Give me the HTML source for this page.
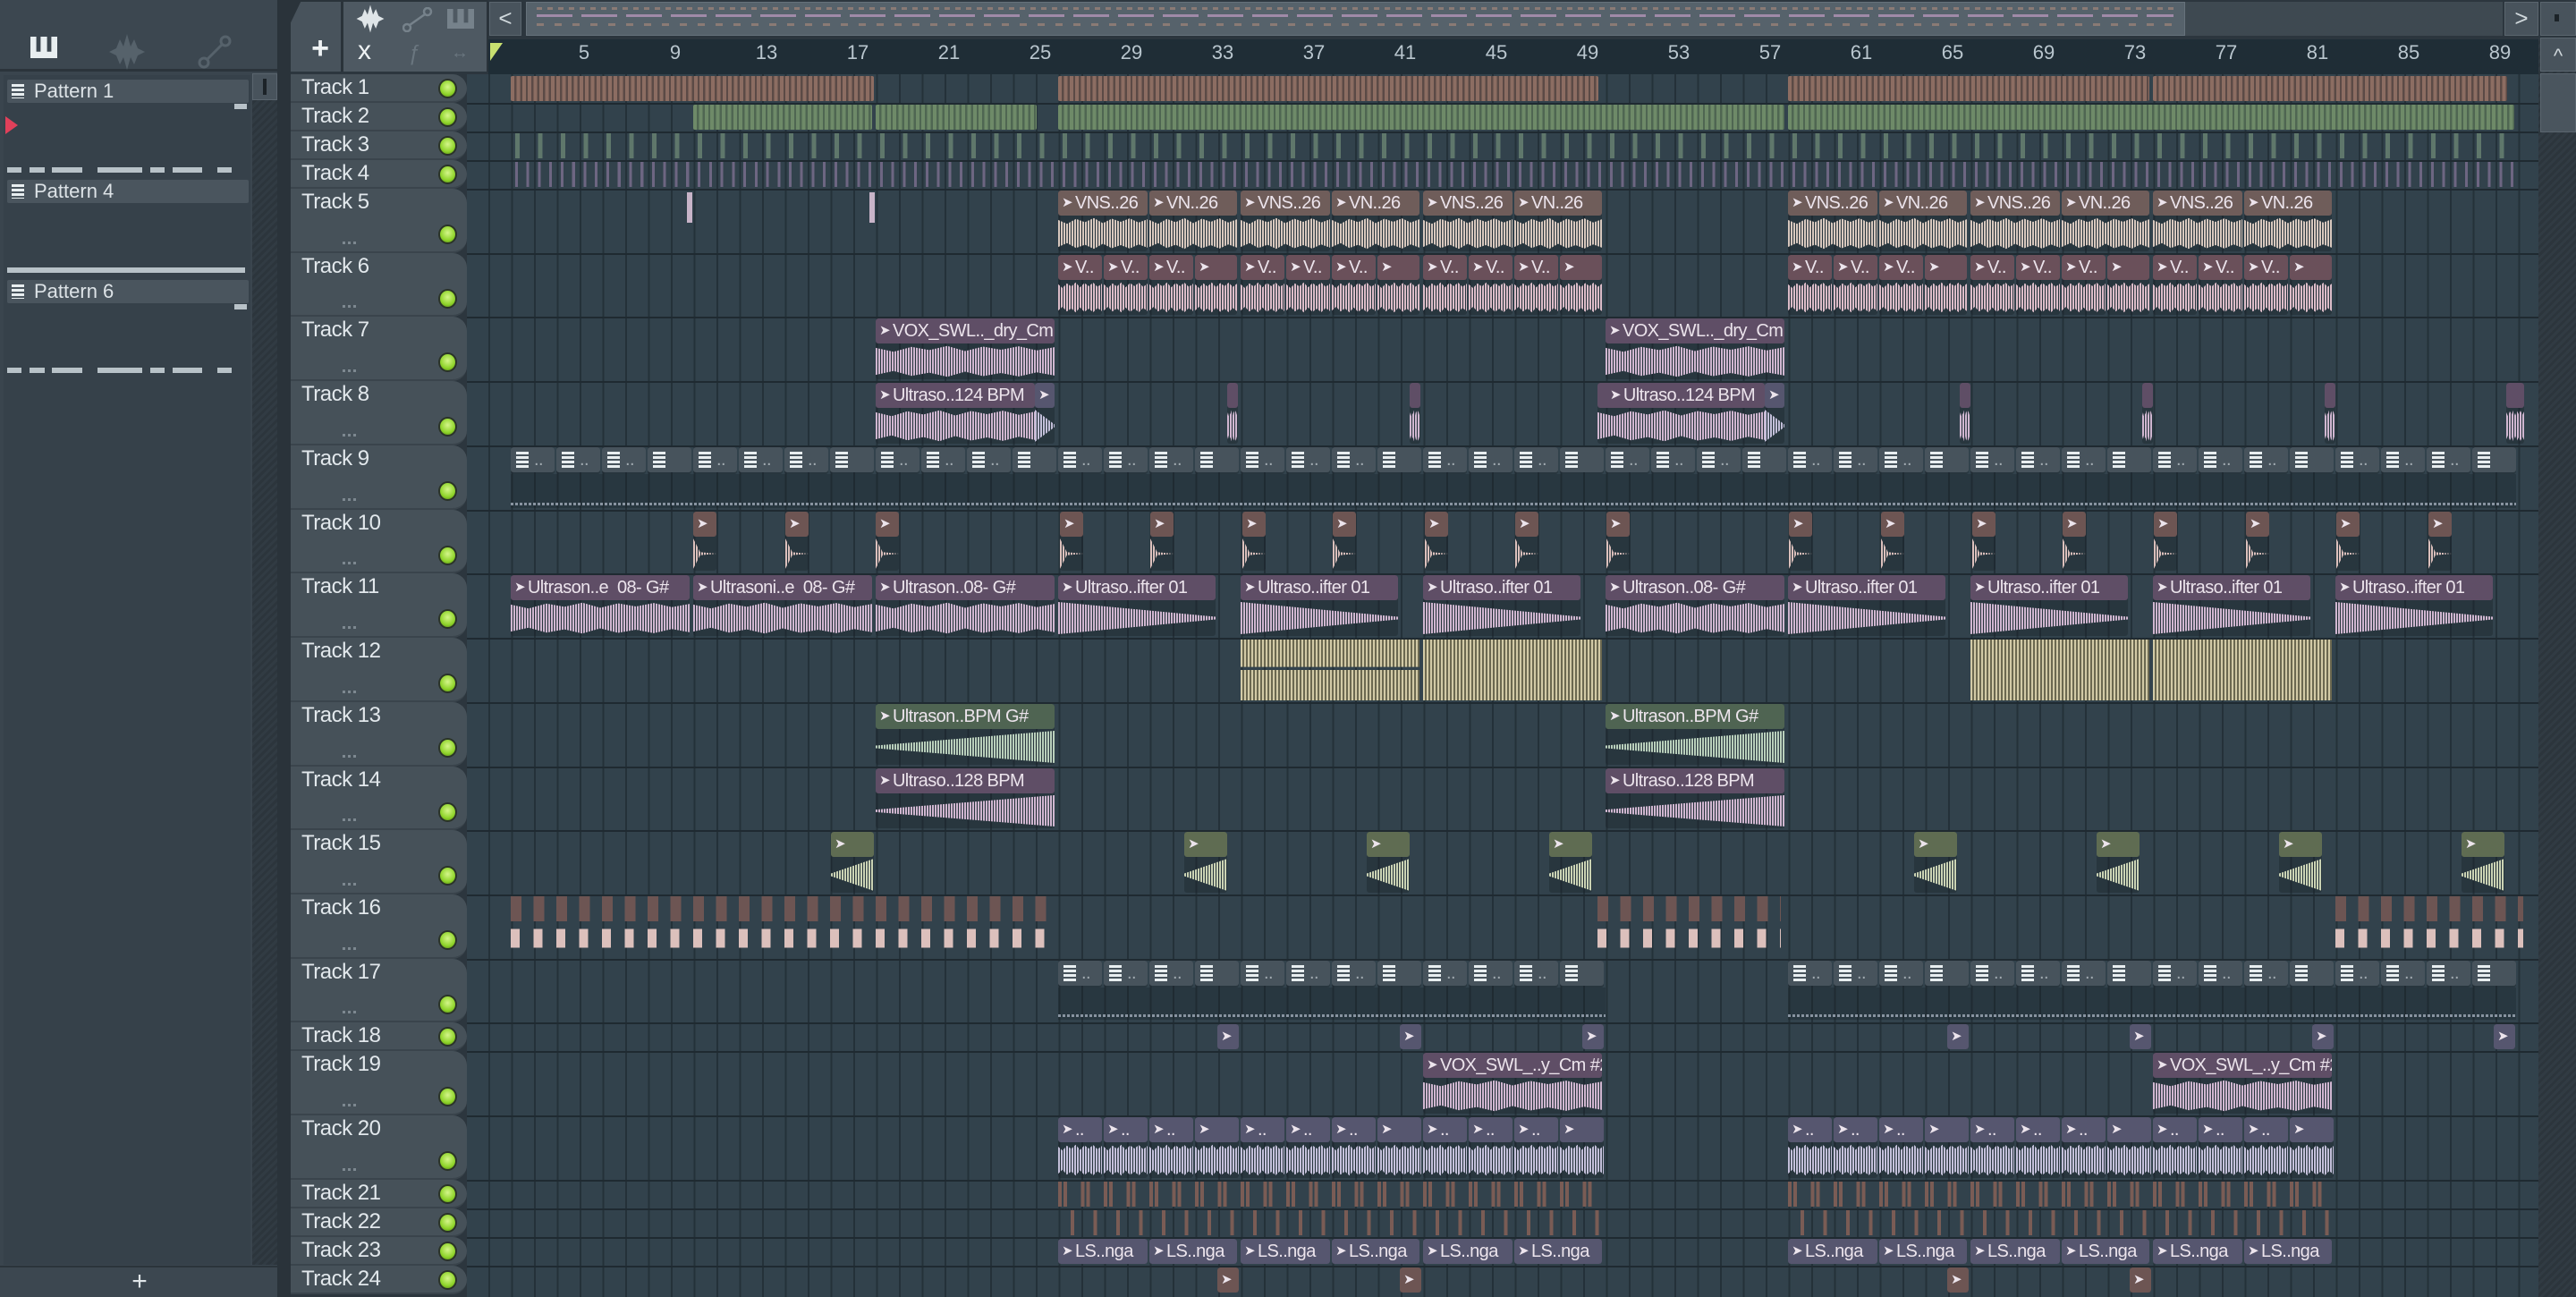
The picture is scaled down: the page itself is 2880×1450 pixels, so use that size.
<!DOCTYPE html>
<html><head><meta charset="utf-8">
<style>
*{box-sizing:border-box;margin:0;padding:0}
body{width:2880px;height:1450px;overflow:hidden;background:#2c363e;font-family:"Liberation Sans Narrow","Liberation Sans",sans-serif;position:relative}
.a{position:absolute}
#lp{left:0;top:0;width:312px;height:1450px;background:#3a454e}
.pat{position:absolute;left:8px;width:270px;height:26px;background:#4a555e;border-radius:2px;color:#dde3e7;font-size:22px;line-height:26px;padding-left:30px}
.pic{position:absolute;left:5px;top:5px;width:14px;height:16px;background:repeating-linear-gradient(180deg,#e8eef0 0 3px,#4a555e 3px 5px)}
.dash{position:absolute;left:8px;height:6px}
#hc .tr{position:absolute;left:325px;width:197px;background:#465159;border-radius:0 16px 16px 0;border-bottom:2px solid #3a444c}
.tr span{position:absolute;left:12px;top:1px;color:#e2e8ec;font-size:24px;letter-spacing:-0.5px}
.led{position:absolute;left:165px;width:21px;height:22px;border-radius:50%;background:radial-gradient(circle at 50% 40%,#d4f58a,#8fd42a 60%,#4e7d12);border:2px solid #2a3328}
.dots{position:absolute;left:58px;bottom:8px;width:16px;height:3px;background:repeating-linear-gradient(90deg,#7d8890 0 3px,transparent 3px 6px)}
#g{left:522px;top:83px;width:2316px;height:1367px;background:#32424c}
#gl{left:546px;top:83px;width:2292px;height:1367px;background:repeating-linear-gradient(90deg,#243139 0 2px,transparent 2px 25.5px)}
.rl{position:absolute;left:522px;width:2316px;height:2px;background:#1f2a31}
#cl{left:546px;top:83px;width:2292px;height:1367px}
.c{position:absolute;border-radius:3px;overflow:hidden;background:rgba(22,32,38,.35)}
.h{position:absolute;left:0;top:0;right:0;height:28px;background:var(--h);border-radius:3px;color:#ece4ec;font-size:20px;letter-spacing:-0.6px;line-height:28px;white-space:nowrap;overflow:hidden;padding-left:4px}
.h i{font-style:normal;font-size:15px;margin-right:3px;position:relative;top:-2px}
.w{position:absolute;left:0;right:0;top:30px;bottom:2px;background:repeating-linear-gradient(90deg,var(--w) 0 2px,rgba(0,0,0,0) 2px 3px);clip-path:polygon(0 8%,10% 20%,20% 5%,30% 15%,40% 2%,50% 18%,60% 4%,70% 14%,80% 3%,90% 16%,100% 6%,100% 94%,90% 84%,80% 97%,70% 86%,60% 96%,50% 82%,40% 98%,30% 85%,20% 95%,10% 80%,0 92%)}
.dec{clip-path:polygon(0 0,100% 46%,100% 54%,0 100%)}
.inc{clip-path:polygon(0 46%,100% 0,100% 100%,0 54%)}
.sp{clip-path:polygon(0 0,30% 45%,100% 50%,30% 55%,0 100%)}
.vn{--h:#6f5d5a;--w:#d8c8be}
.v6{--h:#6a505a;--w:#dcbcc8}
.px{--h:#5f4e66;--w:#d0b6d0}
.gr{--h:#4f6452;--w:#b9cfbb}
.gs{--h:#5f6c52;--w:#cbd3b4}
.br{--h:#6d5553;--w:#dcc0bc}
.bl{--h:#56566f;--w:#c4c0da}
.pt{--h:#47535c}
.pt .h{padding-left:6px;color:#a0aab0}
.pt .h b{display:inline-block;width:14px;height:18px;margin-right:6px;vertical-align:-3px;background:repeating-linear-gradient(180deg,#e8eef0 0 3px,#47535c 3px 5px)}
.s1{background:repeating-linear-gradient(90deg,#8c6d62 0 4px,#5b4a46 4px 6.4px);border-radius:2px}
.s2{background:repeating-linear-gradient(90deg,#6e8a68 0 4px,#4f6652 4px 6.4px);border-radius:2px}
.s3{background:repeating-linear-gradient(90deg,rgba(0,0,0,0) 0 5px,#5f776b 5px 10px,rgba(0,0,0,0) 10px 25.5px)}
.s4{background:repeating-linear-gradient(90deg,rgba(0,0,0,0) 0 5px,#6d6682 5px 8px,rgba(0,0,0,0) 8px 12.75px)}
.s21{background:repeating-linear-gradient(90deg,#7a5c55 0 4px,rgba(0,0,0,0) 4px 6px,#7a5c55 6px 10px,rgba(0,0,0,0) 10px 25.5px)}
.s22{background:repeating-linear-gradient(90deg,rgba(0,0,0,0) 0 14px,#7a5c55 14px 18px,rgba(0,0,0,0) 18px 25.5px)}
.pd{position:absolute;height:3px;background:repeating-linear-gradient(90deg,#8893a0 0 3px,rgba(0,0,0,0) 3px 5px)}
.rn{position:absolute;top:46px;width:50px;text-align:center;color:#b9c6ce;font-size:22px}
</style></head><body>

<div class="a" id="lp"></div>
<div class="a" style="left:0;top:0;width:312px;height:80px;background:#3c4750;border-bottom:3px solid #2b343b"></div>
<div class="a" style="left:34px;top:41px;width:30px;height:24px;background:#e8eef0;clip-path:polygon(0 0,22% 0,22% 70%,38% 70%,38% 0,62% 0,62% 70%,78% 70%,78% 0,100% 0,100% 100%,0 100%)"></div>
<svg class="a" style="left:120px;top:36px" width="44" height="44" viewBox="0 0 44 44"><path d="M2 22 L10 18 L14 8 L18 16 L22 2 L26 16 L30 8 L34 18 L42 22 L34 26 L30 36 L26 28 L22 42 L18 28 L14 36 L10 26Z" fill="#56626b"/></svg>
<svg class="a" style="left:220px;top:38px" width="40" height="40"><circle cx="8" cy="32" r="5" fill="none" stroke="#56626b" stroke-width="3"/><circle cx="32" cy="8" r="5" fill="none" stroke="#56626b" stroke-width="3"/><line x1="12" y1="28" x2="28" y2="12" stroke="#56626b" stroke-width="3"/></svg>
<div class="a" style="left:4px;top:84px;width:276px;height:1330px;background:#36414a"></div>
<div class="pat" style="top:89px"><div class="pic"></div>Pattern 1</div>
<div class="a" style="left:262px;top:116px;width:14px;height:6px;background:#b8c2c8"></div>
<div class="a" style="left:6px;top:130px;width:0;height:0;border-top:10px solid transparent;border-bottom:10px solid transparent;border-left:14px solid #e0405a"></div>
<div class="dash" style="top:187px;width:256px;background:linear-gradient(90deg,#b8c2c8 0 16px,transparent 16px 25px,#b8c2c8 25px 42px,transparent 42px 50px,#b8c2c8 50px 84px,transparent 84px 101px,#b8c2c8 101px 151px,transparent 151px 160px,#b8c2c8 160px 176px,transparent 176px 185px,#b8c2c8 185px 218px,transparent 218px 235px,#b8c2c8 235px 251px,transparent 251px)"></div>
<div class="pat" style="top:201px"><div class="pic"></div>Pattern 4</div>
<div class="a" style="left:8px;top:299px;width:266px;height:6px;background:#b8c2c8"></div>
<div class="pat" style="top:313px"><div class="pic"></div>Pattern 6</div>
<div class="a" style="left:262px;top:340px;width:14px;height:6px;background:#b8c2c8"></div>
<div class="dash" style="top:411px;width:256px;background:linear-gradient(90deg,#b8c2c8 0 16px,transparent 16px 25px,#b8c2c8 25px 42px,transparent 42px 50px,#b8c2c8 50px 84px,transparent 84px 101px,#b8c2c8 101px 151px,transparent 151px 160px,#b8c2c8 160px 176px,transparent 176px 185px,#b8c2c8 185px 218px,transparent 218px 235px,#b8c2c8 235px 251px,transparent 251px)"></div>
<div class="a" style="left:282px;top:84px;width:28px;height:1330px;background:repeating-linear-gradient(135deg,#313b43 0 3px,#2c353c 3px 6px)"></div>
<div class="a" style="left:282px;top:82px;width:28px;height:30px;background:#48535c;border:1px solid #5a656e"></div>
<div class="a" style="left:294px;top:88px;width:4px;height:18px;background:#1c2328"></div>
<div class="a" style="left:0;top:1415px;width:312px;height:35px;background:#3c4750;border-top:2px solid #2b343b;color:#dfe5e8;font-size:30px;text-align:center;line-height:32px">+</div>
<div class="a" style="left:310px;top:0;width:15px;height:1450px;background:#2a333a"></div>

<div class="a" style="left:325px;top:0;width:221px;height:80px;background:#2a333a"></div>
<div class="a" style="left:325px;top:2px;width:56px;height:78px;background:#48535c;clip-path:polygon(20% 0,100% 0,100% 100%,0 100%,0 30%)"></div>
<div class="a" style="left:338px;top:34px;width:40px;text-align:center;color:#eef2f4;font-size:34px;font-weight:bold;line-height:40px">+</div>
<div class="a" style="left:384px;top:2px;width:160px;height:78px;background:#4e5962"></div>
<svg class="a" style="left:392px;top:4px" width="44" height="34" viewBox="0 0 44 44"><path d="M2 22 L10 18 L14 8 L18 16 L22 2 L26 16 L30 8 L34 18 L42 22 L34 26 L30 36 L26 28 L22 42 L18 28 L14 36 L10 26Z" fill="#dfe5e8"/></svg>
<svg class="a" style="left:450px;top:8px" width="34" height="28"><circle cx="5" cy="23" r="4" fill="none" stroke="#76828b" stroke-width="2.5"/><circle cx="28" cy="5" r="4" fill="none" stroke="#76828b" stroke-width="2.5"/><line x1="8" y1="20" x2="25" y2="8" stroke="#76828b" stroke-width="2.5"/></svg>
<div class="a" style="left:500px;top:10px;width:30px;height:22px;background:#76828b;clip-path:polygon(0 0,22% 0,22% 70%,38% 70%,38% 0,62% 0,62% 70%,78% 70%,78% 0,100% 0,100% 100%,0 100%)"></div>
<div class="a" style="left:400px;top:40px;color:#eef2f4;font-size:30px">x</div>
<div class="a" style="left:456px;top:46px;color:#6a767f;font-size:24px;font-style:italic">ƒ</div>
<div class="a" style="left:504px;top:48px;color:#6a767f;font-size:20px">↔</div>

<div class="a" style="left:546px;top:0;width:2334px;height:44px;background:#2c363e"></div>
<div class="a" style="left:547px;top:2px;width:36px;height:38px;background:#48535c;border:1px solid #5a656e;color:#d0d8dc;font-size:26px;text-align:center;line-height:34px">&lt;</div>
<div class="a" style="left:588px;top:2px;width:1855px;height:38px;background:#56626b;border:1px solid #66727b"></div>
<div class="a" style="left:600px;top:8px;width:1830px;height:3px;background:repeating-linear-gradient(90deg,#8a7a75 0 6px,transparent 6px 12px)"></div>
<div class="a" style="left:600px;top:16px;width:1830px;height:3px;background:repeating-linear-gradient(90deg,#a08aa8 0 40px,transparent 40px 50px)"></div>
<div class="a" style="left:600px;top:26px;width:1830px;height:3px;background:repeating-linear-gradient(90deg,#8a7a75 0 8px,transparent 8px 20px)"></div>
<div class="a" style="left:2443px;top:2px;width:355px;height:38px;background:#3e4951"></div>
<div class="a" style="left:2800px;top:2px;width:38px;height:38px;background:#48535c;border:1px solid #5a656e;color:#d0d8dc;font-size:26px;text-align:center;line-height:34px">&gt;</div>
<div class="a" style="left:2840px;top:2px;width:40px;height:38px;background:#48535c;border:1px solid #5a656e"></div>
<div class="a" style="left:2856px;top:16px;width:5px;height:8px;background:#1c2328"></div>
<div class="a" style="left:546px;top:44px;width:2292px;height:39px;background:#1f2d36"></div>
<div class="a" style="left:548px;top:48px;width:0;height:0;border-left:14px solid #c8e070;border-bottom:20px solid transparent"></div>
<div class="rn" style="left:628px">5</div><div class="rn" style="left:730px">9</div><div class="rn" style="left:832px">13</div><div class="rn" style="left:934px">17</div><div class="rn" style="left:1036px">21</div><div class="rn" style="left:1138px">25</div><div class="rn" style="left:1240px">29</div><div class="rn" style="left:1342px">33</div><div class="rn" style="left:1444px">37</div><div class="rn" style="left:1546px">41</div><div class="rn" style="left:1648px">45</div><div class="rn" style="left:1750px">49</div><div class="rn" style="left:1852px">53</div><div class="rn" style="left:1954px">57</div><div class="rn" style="left:2056px">61</div><div class="rn" style="left:2158px">65</div><div class="rn" style="left:2260px">69</div><div class="rn" style="left:2362px">73</div><div class="rn" style="left:2464px">77</div><div class="rn" style="left:2566px">81</div><div class="rn" style="left:2668px">85</div><div class="rn" style="left:2770px">89</div>
<div class="a" style="left:2838px;top:42px;width:42px;height:1408px;background:repeating-linear-gradient(135deg,#313b43 0 3px,#2c353c 3px 6px)"></div>
<div class="a" style="left:2840px;top:42px;width:40px;height:38px;background:#48535c;border:1px solid #5a656e;color:#d0d8dc;font-size:22px;text-align:center;line-height:40px">^</div>
<div class="a" style="left:2840px;top:82px;width:40px;height:66px;background:#4a555e;border:1px solid #5a656e"></div>

<div class="a" id="g"></div>
<div class="a" id="gl"></div>
<div class="rl" style="top:115px"></div><div class="rl" style="top:147px"></div><div class="rl" style="top:179px"></div><div class="rl" style="top:211px"></div><div class="rl" style="top:283px"></div><div class="rl" style="top:354px"></div><div class="rl" style="top:426px"></div><div class="rl" style="top:498px"></div><div class="rl" style="top:570px"></div><div class="rl" style="top:641px"></div><div class="rl" style="top:713px"></div><div class="rl" style="top:785px"></div><div class="rl" style="top:857px"></div><div class="rl" style="top:928px"></div><div class="rl" style="top:1000px"></div><div class="rl" style="top:1072px"></div><div class="rl" style="top:1143px"></div><div class="rl" style="top:1175px"></div><div class="rl" style="top:1247px"></div><div class="rl" style="top:1319px"></div><div class="rl" style="top:1351px"></div><div class="rl" style="top:1383px"></div><div class="rl" style="top:1415px"></div>

<div id="hc">
<div class="tr" style="top:83px;height:32px"><span>Track 1</span><div class="led" style="top:5px"></div></div>
<div class="tr" style="top:115px;height:32px"><span>Track 2</span><div class="led" style="top:5px"></div></div>
<div class="tr" style="top:147px;height:32px"><span>Track 3</span><div class="led" style="top:5px"></div></div>
<div class="tr" style="top:179px;height:32px"><span>Track 4</span><div class="led" style="top:5px"></div></div>
<div class="tr" style="top:211px;height:72px"><span>Track 5</span><div class="led" style="top:40px"></div><div class="dots"></div></div>
<div class="tr" style="top:283px;height:71px"><span>Track 6</span><div class="led" style="top:40px"></div><div class="dots"></div></div>
<div class="tr" style="top:354px;height:72px"><span>Track 7</span><div class="led" style="top:40px"></div><div class="dots"></div></div>
<div class="tr" style="top:426px;height:72px"><span>Track 8</span><div class="led" style="top:40px"></div><div class="dots"></div></div>
<div class="tr" style="top:498px;height:72px"><span>Track 9</span><div class="led" style="top:40px"></div><div class="dots"></div></div>
<div class="tr" style="top:570px;height:71px"><span>Track 10</span><div class="led" style="top:40px"></div><div class="dots"></div></div>
<div class="tr" style="top:641px;height:72px"><span>Track 11</span><div class="led" style="top:40px"></div><div class="dots"></div></div>
<div class="tr" style="top:713px;height:72px"><span>Track 12</span><div class="led" style="top:40px"></div><div class="dots"></div></div>
<div class="tr" style="top:785px;height:72px"><span>Track 13</span><div class="led" style="top:40px"></div><div class="dots"></div></div>
<div class="tr" style="top:857px;height:71px"><span>Track 14</span><div class="led" style="top:40px"></div><div class="dots"></div></div>
<div class="tr" style="top:928px;height:72px"><span>Track 15</span><div class="led" style="top:40px"></div><div class="dots"></div></div>
<div class="tr" style="top:1000px;height:72px"><span>Track 16</span><div class="led" style="top:40px"></div><div class="dots"></div></div>
<div class="tr" style="top:1072px;height:71px"><span>Track 17</span><div class="led" style="top:40px"></div><div class="dots"></div></div>
<div class="tr" style="top:1143px;height:32px"><span>Track 18</span><div class="led" style="top:5px"></div></div>
<div class="tr" style="top:1175px;height:72px"><span>Track 19</span><div class="led" style="top:40px"></div><div class="dots"></div></div>
<div class="tr" style="top:1247px;height:72px"><span>Track 20</span><div class="led" style="top:40px"></div><div class="dots"></div></div>
<div class="tr" style="top:1319px;height:32px"><span>Track 21</span><div class="led" style="top:5px"></div></div>
<div class="tr" style="top:1351px;height:32px"><span>Track 22</span><div class="led" style="top:5px"></div></div>
<div class="tr" style="top:1383px;height:32px"><span>Track 23</span><div class="led" style="top:5px"></div></div>
<div class="tr" style="top:1415px;height:32px"><span>Track 24</span><div class="led" style="top:5px"></div></div>
</div>

<div class="a" id="cl">
<div class="a s1" style="left:25px;top:2px;width:406px;height:28px"></div>
<div class="a s1" style="left:637px;top:2px;width:604px;height:28px"></div>
<div class="a s1" style="left:1453px;top:2px;width:404px;height:28px"></div>
<div class="a s1" style="left:1861px;top:2px;width:396px;height:28px"></div>
<div class="a s2" style="left:229px;top:34px;width:200px;height:28px"></div>
<div class="a s2" style="left:433px;top:34px;width:180px;height:28px"></div>
<div class="a s2" style="left:637px;top:34px;width:812px;height:28px"></div>
<div class="a s2" style="left:1453px;top:34px;width:812px;height:28px"></div>
<div class="a s3" style="left:25px;top:66px;width:2240px;height:28px"></div>
<div class="a s4" style="left:25px;top:98px;width:2240px;height:28px"></div>
<div class="a" style="left:222px;top:132px;width:6px;height:34px;background:#c8b4c8"></div>
<div class="a" style="left:426px;top:132px;width:6px;height:34px;background:#c8b4c8"></div>
<div class="c vn" style="left:637px;top:130px;width:100px;height:68px"><div class="h"><i>➤</i>VNS..26</div><div class="w"></div></div>
<div class="c vn" style="left:739px;top:130px;width:98px;height:68px"><div class="h"><i>➤</i>VN..26</div><div class="w"></div></div>
<div class="c vn" style="left:841px;top:130px;width:100px;height:68px"><div class="h"><i>➤</i>VNS..26</div><div class="w"></div></div>
<div class="c vn" style="left:943px;top:130px;width:98px;height:68px"><div class="h"><i>➤</i>VN..26</div><div class="w"></div></div>
<div class="c vn" style="left:1045px;top:130px;width:100px;height:68px"><div class="h"><i>➤</i>VNS..26</div><div class="w"></div></div>
<div class="c vn" style="left:1147px;top:130px;width:98px;height:68px"><div class="h"><i>➤</i>VN..26</div><div class="w"></div></div>
<div class="c vn" style="left:1453px;top:130px;width:100px;height:68px"><div class="h"><i>➤</i>VNS..26</div><div class="w"></div></div>
<div class="c vn" style="left:1555px;top:130px;width:98px;height:68px"><div class="h"><i>➤</i>VN..26</div><div class="w"></div></div>
<div class="c vn" style="left:1657px;top:130px;width:100px;height:68px"><div class="h"><i>➤</i>VNS..26</div><div class="w"></div></div>
<div class="c vn" style="left:1759px;top:130px;width:98px;height:68px"><div class="h"><i>➤</i>VN..26</div><div class="w"></div></div>
<div class="c vn" style="left:1861px;top:130px;width:100px;height:68px"><div class="h"><i>➤</i>VNS..26</div><div class="w"></div></div>
<div class="c vn" style="left:1963px;top:130px;width:98px;height:68px"><div class="h"><i>➤</i>VN..26</div><div class="w"></div></div>
<div class="c v6" style="left:637px;top:202px;width:49px;height:67px"><div class="h"><i>➤</i>V..</div><div class="w"></div></div>
<div class="c v6" style="left:688px;top:202px;width:49px;height:67px"><div class="h"><i>➤</i>V..</div><div class="w"></div></div>
<div class="c v6" style="left:739px;top:202px;width:49px;height:67px"><div class="h"><i>➤</i>V..</div><div class="w"></div></div>
<div class="c v6" style="left:790px;top:202px;width:47px;height:67px"><div class="h"><i>➤</i></div><div class="w"></div></div>
<div class="c v6" style="left:841px;top:202px;width:49px;height:67px"><div class="h"><i>➤</i>V..</div><div class="w"></div></div>
<div class="c v6" style="left:892px;top:202px;width:49px;height:67px"><div class="h"><i>➤</i>V..</div><div class="w"></div></div>
<div class="c v6" style="left:943px;top:202px;width:49px;height:67px"><div class="h"><i>➤</i>V..</div><div class="w"></div></div>
<div class="c v6" style="left:994px;top:202px;width:47px;height:67px"><div class="h"><i>➤</i></div><div class="w"></div></div>
<div class="c v6" style="left:1045px;top:202px;width:49px;height:67px"><div class="h"><i>➤</i>V..</div><div class="w"></div></div>
<div class="c v6" style="left:1096px;top:202px;width:49px;height:67px"><div class="h"><i>➤</i>V..</div><div class="w"></div></div>
<div class="c v6" style="left:1147px;top:202px;width:49px;height:67px"><div class="h"><i>➤</i>V..</div><div class="w"></div></div>
<div class="c v6" style="left:1198px;top:202px;width:47px;height:67px"><div class="h"><i>➤</i></div><div class="w"></div></div>
<div class="c v6" style="left:1453px;top:202px;width:49px;height:67px"><div class="h"><i>➤</i>V..</div><div class="w"></div></div>
<div class="c v6" style="left:1504px;top:202px;width:49px;height:67px"><div class="h"><i>➤</i>V..</div><div class="w"></div></div>
<div class="c v6" style="left:1555px;top:202px;width:49px;height:67px"><div class="h"><i>➤</i>V..</div><div class="w"></div></div>
<div class="c v6" style="left:1606px;top:202px;width:47px;height:67px"><div class="h"><i>➤</i></div><div class="w"></div></div>
<div class="c v6" style="left:1657px;top:202px;width:49px;height:67px"><div class="h"><i>➤</i>V..</div><div class="w"></div></div>
<div class="c v6" style="left:1708px;top:202px;width:49px;height:67px"><div class="h"><i>➤</i>V..</div><div class="w"></div></div>
<div class="c v6" style="left:1759px;top:202px;width:49px;height:67px"><div class="h"><i>➤</i>V..</div><div class="w"></div></div>
<div class="c v6" style="left:1810px;top:202px;width:47px;height:67px"><div class="h"><i>➤</i></div><div class="w"></div></div>
<div class="c v6" style="left:1861px;top:202px;width:49px;height:67px"><div class="h"><i>➤</i>V..</div><div class="w"></div></div>
<div class="c v6" style="left:1912px;top:202px;width:49px;height:67px"><div class="h"><i>➤</i>V..</div><div class="w"></div></div>
<div class="c v6" style="left:1963px;top:202px;width:49px;height:67px"><div class="h"><i>➤</i>V..</div><div class="w"></div></div>
<div class="c v6" style="left:2014px;top:202px;width:47px;height:67px"><div class="h"><i>➤</i></div><div class="w"></div></div>
<div class="c px" style="left:433px;top:273px;width:200px;height:68px"><div class="h"><i>➤</i>VOX_SWL.._dry_Cm</div><div class="w"></div></div>
<div class="c px" style="left:1249px;top:273px;width:200px;height:68px"><div class="h"><i>➤</i>VOX_SWL.._dry_Cm</div><div class="w"></div></div>
<div class="c px" style="left:433px;top:345px;width:178px;height:68px"><div class="h"><i>➤</i>Ultraso..124 BPM</div><div class="w"></div></div>
<div class="c bl" style="left:611px;top:345px;width:22px;height:68px"><div class="h"><i>➤</i></div><div class="w dec"></div></div>
<div class="c px" style="left:1240px;top:345px;width:187px;height:68px"><div class="h">&nbsp;&nbsp;<i>➤</i>Ultraso..124 BPM</div><div class="w"></div></div>
<div class="c bl" style="left:1427px;top:345px;width:22px;height:68px"><div class="h"><i>➤</i></div><div class="w dec"></div></div>
<div class="c px" style="left:826px;top:345px;width:12px;height:68px"><div class="h"></div><div class="w"></div></div>
<div class="c px" style="left:1030px;top:345px;width:12px;height:68px"><div class="h"></div><div class="w"></div></div>
<div class="c px" style="left:1645px;top:345px;width:12px;height:68px"><div class="h"></div><div class="w"></div></div>
<div class="c px" style="left:1849px;top:345px;width:12px;height:68px"><div class="h"></div><div class="w"></div></div>
<div class="c px" style="left:2053px;top:345px;width:12px;height:68px"><div class="h"></div><div class="w"></div></div>
<div class="c px" style="left:2256px;top:345px;width:20px;height:68px"><div class="h"></div><div class="w"></div></div>
<div class="c pt" style="left:25px;top:417px;width:49px;height:30px"><div class="h"><b></b>..</div></div><div class="c pt" style="left:76px;top:417px;width:49px;height:30px"><div class="h"><b></b>..</div></div><div class="c pt" style="left:127px;top:417px;width:49px;height:30px"><div class="h"><b></b>..</div></div><div class="c pt" style="left:178px;top:417px;width:49px;height:30px"><div class="h"><b></b></div></div>
<div class="c pt" style="left:229px;top:417px;width:49px;height:30px"><div class="h"><b></b>..</div></div><div class="c pt" style="left:280px;top:417px;width:49px;height:30px"><div class="h"><b></b>..</div></div><div class="c pt" style="left:331px;top:417px;width:49px;height:30px"><div class="h"><b></b>..</div></div><div class="c pt" style="left:382px;top:417px;width:49px;height:30px"><div class="h"><b></b></div></div>
<div class="c pt" style="left:433px;top:417px;width:49px;height:30px"><div class="h"><b></b>..</div></div><div class="c pt" style="left:484px;top:417px;width:49px;height:30px"><div class="h"><b></b>..</div></div><div class="c pt" style="left:535px;top:417px;width:49px;height:30px"><div class="h"><b></b>..</div></div><div class="c pt" style="left:586px;top:417px;width:49px;height:30px"><div class="h"><b></b></div></div>
<div class="c pt" style="left:637px;top:417px;width:49px;height:30px"><div class="h"><b></b>..</div></div><div class="c pt" style="left:688px;top:417px;width:49px;height:30px"><div class="h"><b></b>..</div></div><div class="c pt" style="left:739px;top:417px;width:49px;height:30px"><div class="h"><b></b>..</div></div><div class="c pt" style="left:790px;top:417px;width:49px;height:30px"><div class="h"><b></b></div></div>
<div class="c pt" style="left:841px;top:417px;width:49px;height:30px"><div class="h"><b></b>..</div></div><div class="c pt" style="left:892px;top:417px;width:49px;height:30px"><div class="h"><b></b>..</div></div><div class="c pt" style="left:943px;top:417px;width:49px;height:30px"><div class="h"><b></b>..</div></div><div class="c pt" style="left:994px;top:417px;width:49px;height:30px"><div class="h"><b></b></div></div>
<div class="c pt" style="left:1045px;top:417px;width:49px;height:30px"><div class="h"><b></b>..</div></div><div class="c pt" style="left:1096px;top:417px;width:49px;height:30px"><div class="h"><b></b>..</div></div><div class="c pt" style="left:1147px;top:417px;width:49px;height:30px"><div class="h"><b></b>..</div></div><div class="c pt" style="left:1198px;top:417px;width:49px;height:30px"><div class="h"><b></b></div></div>
<div class="c pt" style="left:1249px;top:417px;width:49px;height:30px"><div class="h"><b></b>..</div></div><div class="c pt" style="left:1300px;top:417px;width:49px;height:30px"><div class="h"><b></b>..</div></div><div class="c pt" style="left:1351px;top:417px;width:49px;height:30px"><div class="h"><b></b>..</div></div><div class="c pt" style="left:1402px;top:417px;width:49px;height:30px"><div class="h"><b></b></div></div>
<div class="c pt" style="left:1453px;top:417px;width:49px;height:30px"><div class="h"><b></b>..</div></div><div class="c pt" style="left:1504px;top:417px;width:49px;height:30px"><div class="h"><b></b>..</div></div><div class="c pt" style="left:1555px;top:417px;width:49px;height:30px"><div class="h"><b></b>..</div></div><div class="c pt" style="left:1606px;top:417px;width:49px;height:30px"><div class="h"><b></b></div></div>
<div class="c pt" style="left:1657px;top:417px;width:49px;height:30px"><div class="h"><b></b>..</div></div><div class="c pt" style="left:1708px;top:417px;width:49px;height:30px"><div class="h"><b></b>..</div></div><div class="c pt" style="left:1759px;top:417px;width:49px;height:30px"><div class="h"><b></b>..</div></div><div class="c pt" style="left:1810px;top:417px;width:49px;height:30px"><div class="h"><b></b></div></div>
<div class="c pt" style="left:1861px;top:417px;width:49px;height:30px"><div class="h"><b></b>..</div></div><div class="c pt" style="left:1912px;top:417px;width:49px;height:30px"><div class="h"><b></b>..</div></div><div class="c pt" style="left:1963px;top:417px;width:49px;height:30px"><div class="h"><b></b>..</div></div><div class="c pt" style="left:2014px;top:417px;width:49px;height:30px"><div class="h"><b></b></div></div>
<div class="c pt" style="left:2065px;top:417px;width:49px;height:30px"><div class="h"><b></b>..</div></div><div class="c pt" style="left:2116px;top:417px;width:49px;height:30px"><div class="h"><b></b>..</div></div><div class="c pt" style="left:2167px;top:417px;width:49px;height:30px"><div class="h"><b></b>..</div></div><div class="c pt" style="left:2218px;top:417px;width:49px;height:30px"><div class="h"><b></b></div></div>
<div class="a" style="left:25px;top:447px;width:2242px;height:38px;background:rgba(20,30,36,.3)"></div>
<div class="pd" style="left:25px;top:479px;width:2242px"></div>
<div class="c br" style="left:229px;top:489px;width:26px;height:66px"><div class="h"><i>➤</i></div><div class="w sp"></div></div>
<div class="c br" style="left:332px;top:489px;width:26px;height:66px"><div class="h"><i>➤</i></div><div class="w sp"></div></div>
<div class="c br" style="left:433px;top:489px;width:26px;height:66px"><div class="h"><i>➤</i></div><div class="w sp"></div></div>
<div class="c br" style="left:639px;top:489px;width:26px;height:66px"><div class="h"><i>➤</i></div><div class="w sp"></div></div>
<div class="c br" style="left:740px;top:489px;width:26px;height:66px"><div class="h"><i>➤</i></div><div class="w sp"></div></div>
<div class="c br" style="left:843px;top:489px;width:26px;height:66px"><div class="h"><i>➤</i></div><div class="w sp"></div></div>
<div class="c br" style="left:944px;top:489px;width:26px;height:66px"><div class="h"><i>➤</i></div><div class="w sp"></div></div>
<div class="c br" style="left:1047px;top:489px;width:26px;height:66px"><div class="h"><i>➤</i></div><div class="w sp"></div></div>
<div class="c br" style="left:1148px;top:489px;width:26px;height:66px"><div class="h"><i>➤</i></div><div class="w sp"></div></div>
<div class="c br" style="left:1250px;top:489px;width:26px;height:66px"><div class="h"><i>➤</i></div><div class="w sp"></div></div>
<div class="c br" style="left:1454px;top:489px;width:26px;height:66px"><div class="h"><i>➤</i></div><div class="w sp"></div></div>
<div class="c br" style="left:1557px;top:489px;width:26px;height:66px"><div class="h"><i>➤</i></div><div class="w sp"></div></div>
<div class="c br" style="left:1659px;top:489px;width:26px;height:66px"><div class="h"><i>➤</i></div><div class="w sp"></div></div>
<div class="c br" style="left:1760px;top:489px;width:26px;height:66px"><div class="h"><i>➤</i></div><div class="w sp"></div></div>
<div class="c br" style="left:1862px;top:489px;width:26px;height:66px"><div class="h"><i>➤</i></div><div class="w sp"></div></div>
<div class="c br" style="left:1965px;top:489px;width:26px;height:66px"><div class="h"><i>➤</i></div><div class="w sp"></div></div>
<div class="c br" style="left:2066px;top:489px;width:26px;height:66px"><div class="h"><i>➤</i></div><div class="w sp"></div></div>
<div class="c br" style="left:2169px;top:489px;width:26px;height:66px"><div class="h"><i>➤</i></div><div class="w sp"></div></div>
<div class="c px" style="left:25px;top:560px;width:200px;height:68px"><div class="h"><i>➤</i>Ultrason..e&nbsp; 08- G#</div><div class="w"></div></div>
<div class="c px" style="left:229px;top:560px;width:200px;height:68px"><div class="h"><i>➤</i>Ultrasoni..e&nbsp; 08- G#</div><div class="w"></div></div>
<div class="c px" style="left:433px;top:560px;width:200px;height:68px"><div class="h"><i>➤</i>Ultrason..08- G#</div><div class="w"></div></div>
<div class="c px" style="left:637px;top:560px;width:176px;height:68px"><div class="h"><i>➤</i>Ultraso..ifter 01</div><div class="w dec"></div></div>
<div class="c px" style="left:841px;top:560px;width:176px;height:68px"><div class="h"><i>➤</i>Ultraso..ifter 01</div><div class="w dec"></div></div>
<div class="c px" style="left:1045px;top:560px;width:176px;height:68px"><div class="h"><i>➤</i>Ultraso..ifter 01</div><div class="w dec"></div></div>
<div class="c px" style="left:1249px;top:560px;width:200px;height:68px"><div class="h"><i>➤</i>Ultrason..08- G#</div><div class="w"></div></div>
<div class="c px" style="left:1453px;top:560px;width:176px;height:68px"><div class="h"><i>➤</i>Ultraso..ifter 01</div><div class="w dec"></div></div>
<div class="c px" style="left:1657px;top:560px;width:176px;height:68px"><div class="h"><i>➤</i>Ultraso..ifter 01</div><div class="w dec"></div></div>
<div class="c px" style="left:1861px;top:560px;width:176px;height:68px"><div class="h"><i>➤</i>Ultraso..ifter 01</div><div class="w dec"></div></div>
<div class="c px" style="left:2065px;top:560px;width:176px;height:68px"><div class="h"><i>➤</i>Ultraso..ifter 01</div><div class="w dec"></div></div>
<div class="a" style="left:841px;top:632px;width:200px;height:68px;background:repeating-linear-gradient(90deg,#d2caa6 0 2px,#6b6850 2px 4px);clip-path:polygon(0 0,100% 0,100% 45%,0 45%,0 50%,100% 50%,100% 100%,0 100%)"></div>
<div class="a" style="left:1045px;top:632px;width:200px;height:68px;background:repeating-linear-gradient(90deg,#d2caa6 0 2px,#6b6850 2px 4px)"></div>
<div class="a" style="left:1657px;top:632px;width:200px;height:68px;background:repeating-linear-gradient(90deg,#d2caa6 0 2px,#6b6850 2px 4px)"></div>
<div class="a" style="left:1861px;top:632px;width:200px;height:68px;background:repeating-linear-gradient(90deg,#d2caa6 0 2px,#6b6850 2px 4px)"></div>
<div class="c gr" style="left:433px;top:704px;width:200px;height:68px"><div class="h"><i>➤</i>Ultrason..BPM G#</div><div class="w inc"></div></div>
<div class="c gr" style="left:1249px;top:704px;width:200px;height:68px"><div class="h"><i>➤</i>Ultrason..BPM G#</div><div class="w inc"></div></div>
<div class="c px" style="left:433px;top:776px;width:200px;height:67px"><div class="h"><i>➤</i>Ultraso..128 BPM</div><div class="w inc"></div></div>
<div class="c px" style="left:1249px;top:776px;width:200px;height:67px"><div class="h"><i>➤</i>Ultraso..128 BPM</div><div class="w inc"></div></div>
<div class="c gs" style="left:383px;top:847px;width:48px;height:68px"><div class="h"><i>➤</i></div><div class="w inc"></div></div>
<div class="c gs" style="left:778px;top:847px;width:48px;height:68px"><div class="h"><i>➤</i></div><div class="w inc"></div></div>
<div class="c gs" style="left:982px;top:847px;width:48px;height:68px"><div class="h"><i>➤</i></div><div class="w inc"></div></div>
<div class="c gs" style="left:1186px;top:847px;width:48px;height:68px"><div class="h"><i>➤</i></div><div class="w inc"></div></div>
<div class="c gs" style="left:1594px;top:847px;width:48px;height:68px"><div class="h"><i>➤</i></div><div class="w inc"></div></div>
<div class="c gs" style="left:1798px;top:847px;width:48px;height:68px"><div class="h"><i>➤</i></div><div class="w inc"></div></div>
<div class="c gs" style="left:2002px;top:847px;width:48px;height:68px"><div class="h"><i>➤</i></div><div class="w inc"></div></div>
<div class="c gs" style="left:2206px;top:847px;width:48px;height:68px"><div class="h"><i>➤</i></div><div class="w inc"></div></div>
<div class="a" style="left:25px;top:919px;width:610px;height:28px;background:repeating-linear-gradient(90deg,#6d5553 0 12px,rgba(0,0,0,0) 12px 25.5px)"></div>
<div class="a" style="left:25px;top:951px;width:610px;height:30px;background:repeating-linear-gradient(90deg,#dcc0bc 0 10px,rgba(0,0,0,0) 10px 25.5px);clip-path:polygon(0 15%,100% 15%,100% 85%,0 85%)"></div>
<div class="a" style="left:1240px;top:919px;width:205px;height:28px;background:repeating-linear-gradient(90deg,#6d5553 0 12px,rgba(0,0,0,0) 12px 25.5px)"></div>
<div class="a" style="left:1240px;top:951px;width:205px;height:30px;background:repeating-linear-gradient(90deg,#dcc0bc 0 10px,rgba(0,0,0,0) 10px 25.5px);clip-path:polygon(0 15%,100% 15%,100% 85%,0 85%)"></div>
<div class="a" style="left:2065px;top:919px;width:210px;height:28px;background:repeating-linear-gradient(90deg,#6d5553 0 12px,rgba(0,0,0,0) 12px 25.5px)"></div>
<div class="a" style="left:2065px;top:951px;width:210px;height:30px;background:repeating-linear-gradient(90deg,#dcc0bc 0 10px,rgba(0,0,0,0) 10px 25.5px);clip-path:polygon(0 15%,100% 15%,100% 85%,0 85%)"></div>
<div class="c pt" style="left:637px;top:991px;width:49px;height:30px"><div class="h"><b></b>..</div></div><div class="c pt" style="left:688px;top:991px;width:49px;height:30px"><div class="h"><b></b>..</div></div><div class="c pt" style="left:739px;top:991px;width:49px;height:30px"><div class="h"><b></b>..</div></div><div class="c pt" style="left:790px;top:991px;width:49px;height:30px"><div class="h"><b></b></div></div>
<div class="c pt" style="left:841px;top:991px;width:49px;height:30px"><div class="h"><b></b>..</div></div><div class="c pt" style="left:892px;top:991px;width:49px;height:30px"><div class="h"><b></b>..</div></div><div class="c pt" style="left:943px;top:991px;width:49px;height:30px"><div class="h"><b></b>..</div></div><div class="c pt" style="left:994px;top:991px;width:49px;height:30px"><div class="h"><b></b></div></div>
<div class="c pt" style="left:1045px;top:991px;width:49px;height:30px"><div class="h"><b></b>..</div></div><div class="c pt" style="left:1096px;top:991px;width:49px;height:30px"><div class="h"><b></b>..</div></div><div class="c pt" style="left:1147px;top:991px;width:49px;height:30px"><div class="h"><b></b>..</div></div><div class="c pt" style="left:1198px;top:991px;width:49px;height:30px"><div class="h"><b></b></div></div>
<div class="c pt" style="left:1453px;top:991px;width:49px;height:30px"><div class="h"><b></b>..</div></div><div class="c pt" style="left:1504px;top:991px;width:49px;height:30px"><div class="h"><b></b>..</div></div><div class="c pt" style="left:1555px;top:991px;width:49px;height:30px"><div class="h"><b></b>..</div></div><div class="c pt" style="left:1606px;top:991px;width:49px;height:30px"><div class="h"><b></b></div></div>
<div class="c pt" style="left:1657px;top:991px;width:49px;height:30px"><div class="h"><b></b>..</div></div><div class="c pt" style="left:1708px;top:991px;width:49px;height:30px"><div class="h"><b></b>..</div></div><div class="c pt" style="left:1759px;top:991px;width:49px;height:30px"><div class="h"><b></b>..</div></div><div class="c pt" style="left:1810px;top:991px;width:49px;height:30px"><div class="h"><b></b></div></div>
<div class="c pt" style="left:1861px;top:991px;width:49px;height:30px"><div class="h"><b></b>..</div></div><div class="c pt" style="left:1912px;top:991px;width:49px;height:30px"><div class="h"><b></b>..</div></div><div class="c pt" style="left:1963px;top:991px;width:49px;height:30px"><div class="h"><b></b>..</div></div><div class="c pt" style="left:2014px;top:991px;width:49px;height:30px"><div class="h"><b></b></div></div>
<div class="c pt" style="left:2065px;top:991px;width:49px;height:30px"><div class="h"><b></b>..</div></div><div class="c pt" style="left:2116px;top:991px;width:49px;height:30px"><div class="h"><b></b>..</div></div><div class="c pt" style="left:2167px;top:991px;width:49px;height:30px"><div class="h"><b></b>..</div></div><div class="c pt" style="left:2218px;top:991px;width:49px;height:30px"><div class="h"><b></b></div></div>
<div class="a" style="left:637px;top:1021px;width:612px;height:36px;background:rgba(20,30,36,.3)"></div>
<div class="a" style="left:1453px;top:1021px;width:814px;height:36px;background:rgba(20,30,36,.3)"></div>
<div class="pd" style="left:637px;top:1051px;width:612px"></div>
<div class="pd" style="left:1453px;top:1051px;width:814px"></div>
<div class="c bl" style="left:815px;top:1062px;width:24px;height:28px"><div class="h"><i>➤</i></div></div>
<div class="c bl" style="left:1019px;top:1062px;width:24px;height:28px"><div class="h"><i>➤</i></div></div>
<div class="c bl" style="left:1223px;top:1062px;width:24px;height:28px"><div class="h"><i>➤</i></div></div>
<div class="c bl" style="left:1631px;top:1062px;width:24px;height:28px"><div class="h"><i>➤</i></div></div>
<div class="c bl" style="left:1835px;top:1062px;width:24px;height:28px"><div class="h"><i>➤</i></div></div>
<div class="c bl" style="left:2039px;top:1062px;width:24px;height:28px"><div class="h"><i>➤</i></div></div>
<div class="c bl" style="left:2242px;top:1062px;width:24px;height:28px"><div class="h"><i>➤</i></div></div>
<div class="c px" style="left:1045px;top:1094px;width:200px;height:68px"><div class="h"><i>➤</i>VOX_SWL_..y_Cm #2</div><div class="w"></div></div>
<div class="c px" style="left:1861px;top:1094px;width:200px;height:68px"><div class="h"><i>➤</i>VOX_SWL_..y_Cm #2</div><div class="w"></div></div>
<div class="c bl" style="left:637px;top:1166px;width:49px;height:68px"><div class="h"><i>➤</i>..</div><div class="w"></div></div><div class="c bl" style="left:688px;top:1166px;width:49px;height:68px"><div class="h"><i>➤</i>..</div><div class="w"></div></div><div class="c bl" style="left:739px;top:1166px;width:49px;height:68px"><div class="h"><i>➤</i>..</div><div class="w"></div></div><div class="c bl" style="left:790px;top:1166px;width:49px;height:68px"><div class="h"><i>➤</i></div><div class="w"></div></div>
<div class="c bl" style="left:841px;top:1166px;width:49px;height:68px"><div class="h"><i>➤</i>..</div><div class="w"></div></div><div class="c bl" style="left:892px;top:1166px;width:49px;height:68px"><div class="h"><i>➤</i>..</div><div class="w"></div></div><div class="c bl" style="left:943px;top:1166px;width:49px;height:68px"><div class="h"><i>➤</i>..</div><div class="w"></div></div><div class="c bl" style="left:994px;top:1166px;width:49px;height:68px"><div class="h"><i>➤</i></div><div class="w"></div></div>
<div class="c bl" style="left:1045px;top:1166px;width:49px;height:68px"><div class="h"><i>➤</i>..</div><div class="w"></div></div><div class="c bl" style="left:1096px;top:1166px;width:49px;height:68px"><div class="h"><i>➤</i>..</div><div class="w"></div></div><div class="c bl" style="left:1147px;top:1166px;width:49px;height:68px"><div class="h"><i>➤</i>..</div><div class="w"></div></div><div class="c bl" style="left:1198px;top:1166px;width:49px;height:68px"><div class="h"><i>➤</i></div><div class="w"></div></div>
<div class="c bl" style="left:1453px;top:1166px;width:49px;height:68px"><div class="h"><i>➤</i>..</div><div class="w"></div></div><div class="c bl" style="left:1504px;top:1166px;width:49px;height:68px"><div class="h"><i>➤</i>..</div><div class="w"></div></div><div class="c bl" style="left:1555px;top:1166px;width:49px;height:68px"><div class="h"><i>➤</i>..</div><div class="w"></div></div><div class="c bl" style="left:1606px;top:1166px;width:49px;height:68px"><div class="h"><i>➤</i></div><div class="w"></div></div>
<div class="c bl" style="left:1657px;top:1166px;width:49px;height:68px"><div class="h"><i>➤</i>..</div><div class="w"></div></div><div class="c bl" style="left:1708px;top:1166px;width:49px;height:68px"><div class="h"><i>➤</i>..</div><div class="w"></div></div><div class="c bl" style="left:1759px;top:1166px;width:49px;height:68px"><div class="h"><i>➤</i>..</div><div class="w"></div></div><div class="c bl" style="left:1810px;top:1166px;width:49px;height:68px"><div class="h"><i>➤</i></div><div class="w"></div></div>
<div class="c bl" style="left:1861px;top:1166px;width:49px;height:68px"><div class="h"><i>➤</i>..</div><div class="w"></div></div><div class="c bl" style="left:1912px;top:1166px;width:49px;height:68px"><div class="h"><i>➤</i>..</div><div class="w"></div></div><div class="c bl" style="left:1963px;top:1166px;width:49px;height:68px"><div class="h"><i>➤</i>..</div><div class="w"></div></div><div class="c bl" style="left:2014px;top:1166px;width:49px;height:68px"><div class="h"><i>➤</i></div><div class="w"></div></div>
<div class="a s21" style="left:637px;top:1238px;width:612px;height:28px"></div>
<div class="a s21" style="left:1453px;top:1238px;width:612px;height:28px"></div>
<div class="a s22" style="left:637px;top:1270px;width:612px;height:28px"></div>
<div class="a s22" style="left:1453px;top:1270px;width:616px;height:28px"></div>
<div class="c bl" style="left:637px;top:1302px;width:100px;height:28px"><div class="h"><i>➤</i>LS..nga</div></div><div class="c bl" style="left:739px;top:1302px;width:98px;height:28px"><div class="h"><i>➤</i>LS..nga</div></div>
<div class="c bl" style="left:841px;top:1302px;width:100px;height:28px"><div class="h"><i>➤</i>LS..nga</div></div><div class="c bl" style="left:943px;top:1302px;width:98px;height:28px"><div class="h"><i>➤</i>LS..nga</div></div>
<div class="c bl" style="left:1045px;top:1302px;width:100px;height:28px"><div class="h"><i>➤</i>LS..nga</div></div><div class="c bl" style="left:1147px;top:1302px;width:98px;height:28px"><div class="h"><i>➤</i>LS..nga</div></div>
<div class="c bl" style="left:1453px;top:1302px;width:100px;height:28px"><div class="h"><i>➤</i>LS..nga</div></div><div class="c bl" style="left:1555px;top:1302px;width:98px;height:28px"><div class="h"><i>➤</i>LS..nga</div></div>
<div class="c bl" style="left:1657px;top:1302px;width:100px;height:28px"><div class="h"><i>➤</i>LS..nga</div></div><div class="c bl" style="left:1759px;top:1302px;width:98px;height:28px"><div class="h"><i>➤</i>LS..nga</div></div>
<div class="c bl" style="left:1861px;top:1302px;width:100px;height:28px"><div class="h"><i>➤</i>LS..nga</div></div><div class="c bl" style="left:1963px;top:1302px;width:98px;height:28px"><div class="h"><i>➤</i>LS..nga</div></div>
<div class="c br" style="left:815px;top:1334px;width:24px;height:28px"><div class="h"><i>➤</i></div></div>
<div class="c br" style="left:1019px;top:1334px;width:24px;height:28px"><div class="h"><i>➤</i></div></div>
<div class="c br" style="left:1631px;top:1334px;width:24px;height:28px"><div class="h"><i>➤</i></div></div>
<div class="c br" style="left:1835px;top:1334px;width:24px;height:28px"><div class="h"><i>➤</i></div></div>
</div>
</body></html>
